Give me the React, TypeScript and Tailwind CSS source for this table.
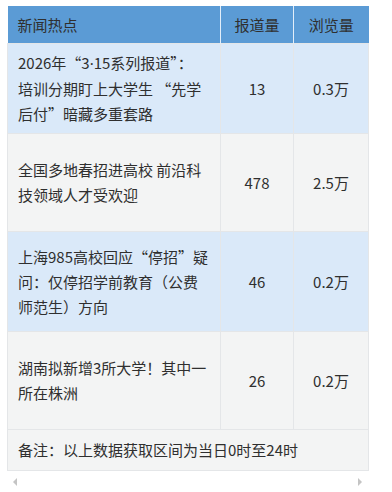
import React from "react";

type Row = {
  title: React.ReactNode[];
  reports: string;
  views: string;
  height: string;
  tone: "blue" | "gray";
};

const dot = <span style={{ fontFamily: '"Noto Sans", sans-serif' }}>·</span>;

const rows: Row[] = [
  {
    title: [<>2026年“3{dot}15系列报道”：</>, "培训分期盯上大学生 “先学", "后付”暗藏多重套路"],
    reports: "13",
    views: "0.3万",
    height: "h-[90px]",
    tone: "blue",
  },
  {
    title: ["全国多地春招进高校 前沿科", "技领域人才受欢迎"],
    reports: "478",
    views: "2.5万",
    height: "h-[98px]",
    tone: "gray",
  },
  {
    title: ["上海985高校回应“停招”疑", "问：仅停招学前教育（公费", "师范生）方向"],
    reports: "46",
    views: "0.2万",
    height: "h-[100px]",
    tone: "blue",
  },
  {
    title: ["湖南拟新增3所大学！其中一", "所在株洲"],
    reports: "26",
    views: "0.2万",
    height: "h-[98px]",
    tone: "gray",
  },
];

export default function App() {
  return (
    <div
      className="w-[392px] h-[492px] bg-white pl-[7px] pt-[6px] text-[15px] leading-[25px] text-[#2f2f2f]"
      style={{ fontFamily: '"Noto Sans CJK SC", "Noto Sans", sans-serif' }}
    >
      <table className="w-[361px] table-fixed border-collapse">
        <colgroup>
          <col className="w-[213px]" />
          <col className="w-[73px]" />
          <col className="w-[75px]" />
        </colgroup>
        <thead>
          <tr className="h-[37px] bg-[#5b9bd5]">
            <th className="px-[10px] text-left font-normal">新闻热点</th>
            <th className="border-l border-[#e3eef9] text-center font-normal">报道量</th>
            <th className="border-l border-[#e3eef9] text-center font-normal">浏览量</th>
          </tr>
        </thead>
        <tbody>
          {rows.map((r) => (
            <tr
              key={r.reports}
              className={`${r.height} ${r.tone === "blue" ? "bg-[#dae9f9]" : "bg-[#f3f4f4]"}`}
            >
              <td className="border border-[#e4e6e8] px-[10px] align-middle">
                {r.title.map((line, i) => (
                  <div key={i} className="whitespace-nowrap">
                    {line}
                  </div>
                ))}
              </td>
              <td className="border border-[#e4e6e8] text-center align-middle">{r.reports}</td>
              <td className="border border-[#e4e6e8] text-center align-middle">{r.views}</td>
            </tr>
          ))}
          <tr className="h-[41px] bg-[#f3f4f4]">
            <td colSpan={3} className="border border-[#e4e6e8] px-[10px] align-middle whitespace-nowrap">
              备注：以上数据获取区间为当日0时至24时
            </td>
          </tr>
        </tbody>
      </table>
      <div className="flex w-[361px] items-center justify-between pl-[6px] pr-[6px] pt-[7px]">
        <svg width="4" height="8" viewBox="0 0 4 8">
          <path d="M4 0 L0 4 L4 8 Z" fill="#c4c4c4" />
        </svg>
        <svg width="4" height="8" viewBox="0 0 4 8">
          <path d="M0 0 L4 4 L0 8 Z" fill="#c4c4c4" />
        </svg>
      </div>
    </div>
  );
}
